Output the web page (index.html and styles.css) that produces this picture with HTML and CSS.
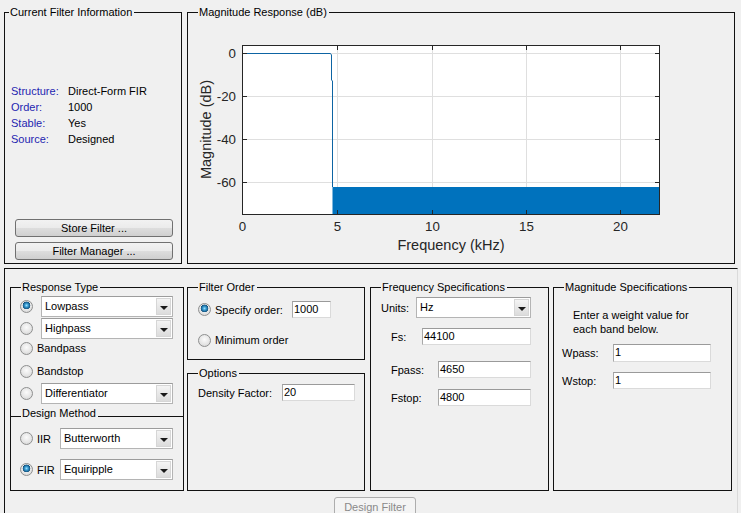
FILE: index.html
```html
<!DOCTYPE html>
<html>
<head>
<meta charset="utf-8">
<title>Filter Designer</title>
<link rel="stylesheet" href="styles.css">
</head>
<body>
<div class="app">
  <div class="top">
    <div class="panel info">
      <span class="ptitle first">Current Filter Information</span>
      <div class="kv">
        <span class="k">Structure:</span><span>Direct-Form FIR</span>
        <span class="k">Order:</span><span>1000</span>
        <span class="k">Stable:</span><span>Yes</span>
        <span class="k">Source:</span><span>Designed</span>
      </div>
      <div class="btns">
        <div class="btn">Store Filter ...</div>
        <div class="btn">Filter Manager ...</div>
      </div>
    </div>
    <div class="panel plot">
      <span class="ptitle">Magnitude Response (dB)</span>
      <svg class="chart" width="546" height="250" viewBox="0 0 546 250">
        <rect x="54.5" y="32.5" width="417" height="169" fill="#fff"/>
        <g stroke="#dfdfdf" stroke-width="1">
          <line x1="149.5" y1="33" x2="149.5" y2="201"/>
          <line x1="244.5" y1="33" x2="244.5" y2="201"/>
          <line x1="338.5" y1="33" x2="338.5" y2="201"/>
          <line x1="432.5" y1="33" x2="432.5" y2="201"/>
          <line x1="55" y1="40.5" x2="471" y2="40.5"/>
          <line x1="55" y1="83.5" x2="471" y2="83.5"/>
          <line x1="55" y1="126.5" x2="471" y2="126.5"/>
          <line x1="55" y1="169.5" x2="471" y2="169.5"/>
        </g>
        <rect x="144.5" y="174" width="327" height="27.5" fill="#0072bd"/>
        <path d="M54.5 40.5H142.5L143.5 42V67L144.5 68V174" fill="none" stroke="#0d64a3" stroke-width="1"/>
        <rect x="54.5" y="32.5" width="417" height="169" fill="none" stroke="#262626"/>
        <g stroke="#262626" stroke-width="1">
          <line x1="149.5" y1="201" x2="149.5" y2="197"/>
          <line x1="244.5" y1="201" x2="244.5" y2="197"/>
          <line x1="338.5" y1="201" x2="338.5" y2="197"/>
          <line x1="432.5" y1="201" x2="432.5" y2="197"/>
          <line x1="149.5" y1="33" x2="149.5" y2="37"/>
          <line x1="244.5" y1="33" x2="244.5" y2="37"/>
          <line x1="338.5" y1="33" x2="338.5" y2="37"/>
          <line x1="432.5" y1="33" x2="432.5" y2="37"/>
          <line x1="55" y1="40.5" x2="59" y2="40.5"/>
          <line x1="55" y1="83.5" x2="59" y2="83.5"/>
          <line x1="55" y1="126.5" x2="59" y2="126.5"/>
          <line x1="55" y1="169.5" x2="59" y2="169.5"/>
          <line x1="471" y1="40.5" x2="467" y2="40.5"/>
          <line x1="471" y1="83.5" x2="467" y2="83.5"/>
          <line x1="471" y1="126.5" x2="467" y2="126.5"/>
          <line x1="471" y1="169.5" x2="467" y2="169.5"/>
        </g>
        <g class="tick" text-anchor="end">
          <text x="48" y="45">0</text>
          <text x="48" y="88">-20</text>
          <text x="48" y="131">-40</text>
          <text x="48" y="174">-60</text>
        </g>
        <g class="tick" text-anchor="middle">
          <text x="54.5" y="218">0</text>
          <text x="149.5" y="218">5</text>
          <text x="244.5" y="218">10</text>
          <text x="338.5" y="218">15</text>
          <text x="432.5" y="218">20</text>
        </g>
        <text class="axlabel" x="263" y="236.5" text-anchor="middle">Frequency (kHz)</text>
        <text class="axlabel" transform="translate(23 116.5) rotate(-90)" text-anchor="middle">Magnitude (dB)</text>
      </svg>
    </div>
  </div>

  <div class="bottom">
    <div class="cols">
      <div class="col c1">
        <div class="panel resp">
          <span class="ptitle">Response Type</span>
          <div class="row sel-row r1"><span class="radio on"></span><div class="select wide"><span class="sv">Lowpass</span><span class="arrow"></span></div></div>
          <div class="row sel-row r2"><span class="radio"></span><div class="select wide"><span class="sv">Highpass</span><span class="arrow"></span></div></div>
          <div class="row txt-row r3"><span class="radio"></span><span class="rl">Bandpass</span></div>
          <div class="row txt-row r4"><span class="radio"></span><span class="rl">Bandstop</span></div>
          <div class="row sel-row r5"><span class="radio"></span><div class="select wide"><span class="sv">Differentiator</span><span class="arrow"></span></div></div>
        </div>
        <div class="panel design">
          <span class="ptitle dtitle">Design Method</span>
          <div class="row sel-row d1"><span class="radio"></span><span class="rl dm">IIR</span><div class="select narrow"><span class="sv">Butterworth</span><span class="arrow"></span></div></div>
          <div class="row sel-row d2"><span class="radio on"></span><span class="rl dm">FIR</span><div class="select narrow"><span class="sv">Equiripple</span><span class="arrow"></span></div></div>
        </div>
      </div>

      <div class="col c2">
        <div class="panel order">
          <span class="ptitle">Filter Order</span>
          <div class="row o1"><span class="radio on"></span><span class="rl ol">Specify order:</span><div class="input w-order">1000</div></div>
          <div class="row o2"><span class="radio"></span><span class="rl ol">Minimum order</span></div>
        </div>
        <div class="panel options">
          <span class="ptitle">Options</span>
          <div class="row opt1"><span class="fl dl">Density Factor:</span><div class="input w-dens">20</div></div>
        </div>
      </div>

      <div class="panel freq">
        <span class="ptitle">Frequency Specifications</span>
        <div class="row f0"><span class="fl ul">Units:</span><div class="select units"><span class="sv">Hz</span><span class="arrow"></span></div></div>
        <div class="row f1"><span class="fl fsl">Fs:</span><div class="input w-fs">44100</div></div>
        <div class="row f2"><span class="fl fpl">Fpass:</span><div class="input w-fp">4650</div></div>
        <div class="row f3"><span class="fl fpl">Fstop:</span><div class="input w-fp">4800</div></div>
      </div>

      <div class="panel mag">
        <span class="ptitle">Magnitude Specifications</span>
        <p class="note">Enter a weight value for<br>each band below.</p>
        <div class="row m1"><span class="fl wl">Wpass:</span><div class="input w-w">1</div></div>
        <div class="row m2"><span class="fl wl">Wstop:</span><div class="input w-w">1</div></div>
      </div>
    </div>
    <div class="design-btn">Design Filter</div>
  </div>
</div>
</body>
</html>
```

FILE: styles.css
```css
* { box-sizing: border-box; margin: 0; padding: 0; }

html, body {
  background: #f0f0f0;
}

body {
  width: 741px;
  height: 513px;
  overflow: hidden;
  font-family: "Liberation Sans", Arial, sans-serif;
  font-size: 11px;
  color: #000;
}

.app {
  padding: 12px 0 0 4px;
}

.panel {
  position: relative;
  border: 1px solid #111;
}

.ptitle {
  position: absolute;
  top: -8px;
  left: 10px;
  padding: 0 2px 0 1px;
  line-height: 14px;
  background: #f0f0f0;
  white-space: nowrap;
}

.ptitle.first { left: 4px; }
.ptitle.dtitle { top: -11px; }

/* ---------- top row ---------- */
.top {
  display: flex;
  gap: 5px;
  height: 252px;
}

.info {
  width: 178px;
  display: flex;
  flex-direction: column;
  padding: 70px 0 3px 6px;
}

.kv {
  display: grid;
  grid-template-columns: 57px auto;
  line-height: 16px;
}

.kv .k { color: #1f1fb0; }

.btns {
  margin-top: auto;
  padding-left: 4px;
  display: flex;
  flex-direction: column;
  gap: 5px;
}

.btn {
  width: 158px;
  height: 18px;
  line-height: 16px;
  text-align: center;
  border: 1px solid #707070;
  border-radius: 3px;
  background: linear-gradient(#f2f2f2 0%, #ebebeb 48%, #dddddd 52%, #cfcfcf 100%);
}

.plot {
  width: 548px;
}

.chart {
  display: block;
}

.chart .tick {
  font-family: "Liberation Sans", Arial, sans-serif;
  font-size: 13.3px;
  fill: #262626;
}

.chart .axlabel {
  font-family: "Liberation Sans", Arial, sans-serif;
  font-size: 14.5px;
  fill: #262626;
}

/* ---------- bottom area ---------- */
.bottom {
  margin-top: 4px;
  width: 734px;
  height: 250px;
  border-top: 1px solid #111;
  border-left: 1px solid #111;
  border-right: 1px solid #dadada;
  padding: 18px 0 0 5px;
}

.cols {
  display: flex;
  height: 204px;
}

.col {
  display: flex;
  flex-direction: column;
}

.c1 { width: 174px; }
.c2 { width: 178px; margin-left: 3px; }

.resp { height: 130px; padding-left: 9px; }
.design { height: 74px; border-top: 0; padding-left: 9px; }

.order { height: 73px; padding-left: 10px; }
.options { height: 118px; margin-top: 13px; padding-left: 10px; }

.freq { width: 179px; margin-left: 5px; padding-left: 10px; }
.mag { width: 179px; margin-left: 4px; padding-left: 8px; }

.row {
  display: flex;
  align-items: center;
}

.sel-row { height: 21px; }
.txt-row { height: 16px; }

.r1 { margin-top: 8px; }
.r2 { margin-top: 1px; }
.r3 { margin-top: 1px; }
.r4 { margin-top: 7px; }
.r5 { margin-top: 4px; }

.d1 { margin-top: 11px; }
.d2 { margin-top: 10px; }

.o1 { margin-top: 13px; height: 17px; }
.o2 { margin-top: 14px; height: 16px; }

.opt1 { margin-top: 10px; height: 17px; }

.f0 { margin-top: 9px; height: 21px; }
.f1 { margin-top: 10px; height: 17px; padding-left: 10px; }
.f2 { margin-top: 16px; height: 17px; padding-left: 10px; }
.f3 { margin-top: 11px; height: 17px; padding-left: 10px; }

.m1 { margin-top: 8px; height: 18px; }
.m2 { margin-top: 10px; height: 17px; }

/* radio buttons */
.radio {
  flex: none;
  width: 13px;
  height: 13px;
  border-radius: 50%;
  border: 1px solid #8e8f8f;
  background: radial-gradient(circle at 50% 40%, #fbfbfb 0, #e6e6e6 55%, #cfcfcf 100%);
}

.radio.on {
  background:
    radial-gradient(circle at 50% 40%, #9fe2ff 0, #3c9fd4 1.6px, #1b6a9c 3px, #15507a 3.6px, rgba(21,80,122,0) 4.1px),
    radial-gradient(circle at 50% 40%, #fbfbfb 0, #e6e6e6 55%, #cfcfcf 100%);
}

.rl {
  margin-left: 4px;
  white-space: nowrap;
}

.dm { width: 23px; }
.ol { width: 77px; margin-left: 4px; }

/* select (popup menu) */
.select {
  display: flex;
  height: 21px;
  background: #fff;
  border: 1px solid #b4b4b4;
  border-top-color: #9c9c9c;
}

.select.wide { width: 132px; margin-left: 8px; }
.select.narrow { width: 113px; }
.select.units { width: 115px; }

.sv {
  flex: 1;
  padding-left: 3px;
  line-height: 19px;
}

.arrow {
  width: 15px;
  margin: 1px;
  border: 1px solid #d6d6d6;
  background: linear-gradient(#f4f4f4, #dcdcdc);
  position: relative;
}

.arrow::after {
  content: "";
  position: absolute;
  left: 3px;
  top: 7px;
  border-left: 4px solid transparent;
  border-right: 4px solid transparent;
  border-top: 4px solid #1a1a1a;
}

/* edit boxes */
.input {
  height: 100%;
  background: #fff;
  border: 1px solid #dadada;
  border-top-color: #9a9a9a;
  border-left-color: #a8a8a8;
  padding-left: 1px;
  line-height: 14px;
  white-space: nowrap;
}

.w-order { width: 39px; }
.w-dens { width: 73px; }
.w-fs { width: 109px; }
.w-fp { width: 93px; }
.w-w { width: 98px; }

.fl { white-space: nowrap; }
.dl { width: 84px; }
.ul { width: 35px; }
.fsl { width: 31px; }
.fpl { width: 47px; }
.wl { width: 51px; }

.note {
  margin-top: 20px;
  padding-left: 11px;
  line-height: 14px;
}

.design-btn {
  margin: 6px 0 0 324px;
  width: 82px;
  height: 20px;
  line-height: 18px;
  text-align: center;
  color: #8a8a8a;
  border: 1px solid #adadad;
  border-radius: 3px;
  background: #f4f4f4;
}
```
